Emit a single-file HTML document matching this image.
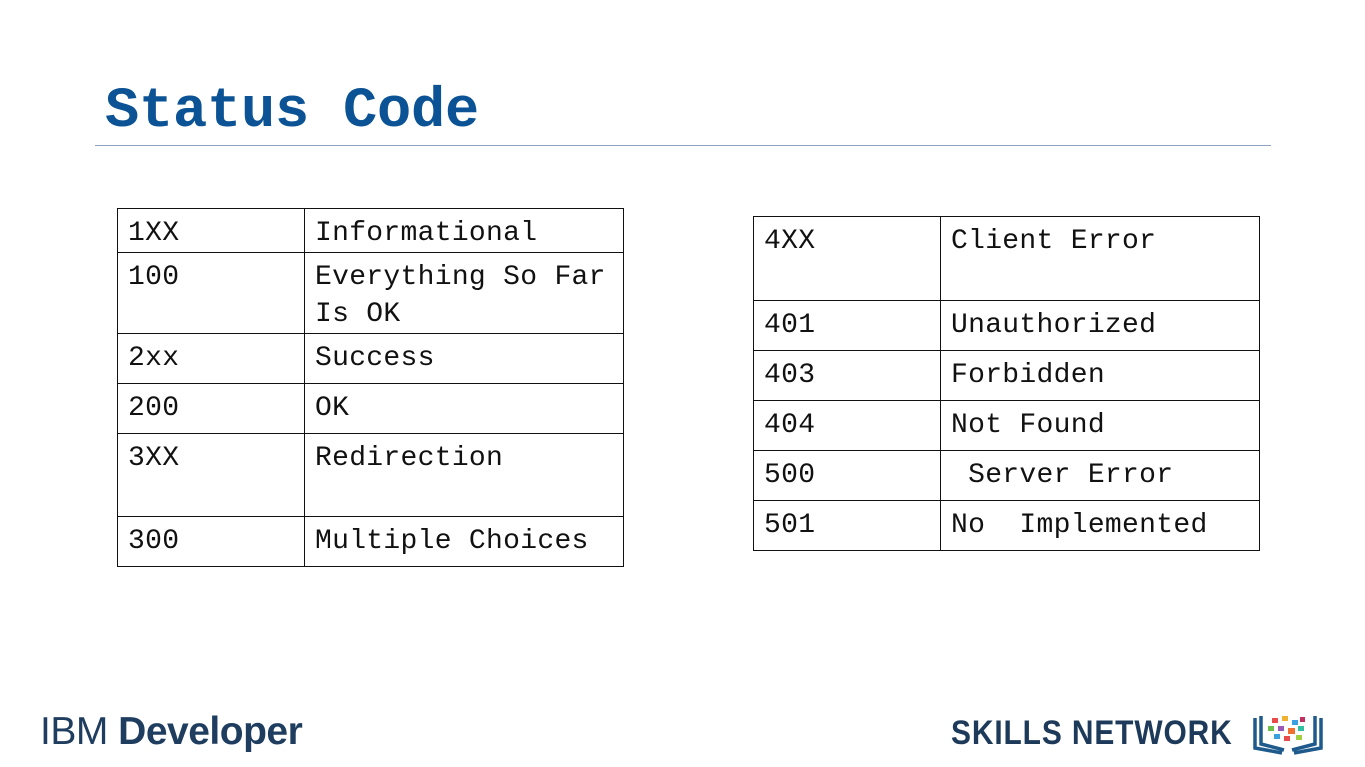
<!DOCTYPE html>
<html><head><meta charset="utf-8"><style>
body{margin:0;width:1365px;height:767px;background:#fff;position:relative;overflow:hidden;font-family:"Liberation Mono",monospace}
.t{position:absolute;left:105px;top:80px;font-size:57px;font-weight:bold;color:#0b5394;letter-spacing:-0.2px}
.hr{position:absolute;left:95px;top:145px;width:1176px;height:1px;background:#8ea3c4}
table{position:absolute;border-collapse:collapse;font-size:28px;color:#111}
td{border:1.5px solid #111;padding:6px 10px 0 10px;vertical-align:top;line-height:37px;box-sizing:border-box;letter-spacing:0.3px}
.ibm{position:absolute;left:40px;top:710px;font-family:"Liberation Sans",sans-serif;font-size:39px;color:#1f3d5f;letter-spacing:-0.5px}
.sk{position:absolute;left:951px;top:714px;font-family:"Liberation Sans",sans-serif;font-weight:bold;font-size:34px;color:#1e3a5a;letter-spacing:1px;transform:scaleX(0.88);transform-origin:left}
</style></head><body>
<div class="t">Status Code</div>
<div class="hr"></div>
<table style="left:117px;top:208px;width:507px">
<tr style="height:44px"><td style="width:187px">1XX</td><td>Informational</td></tr>
<tr style="height:81px"><td>100</td><td>Everything So Far Is OK</td></tr>
<tr style="height:50px"><td>2xx</td><td>Success</td></tr>
<tr style="height:50px"><td>200</td><td>OK</td></tr>
<tr style="height:83px"><td>3XX</td><td>Redirection</td></tr>
<tr style="height:50px"><td>300</td><td>Multiple Choices</td></tr>
</table>
<table style="left:753px;top:216px;width:507px">
<tr style="height:84px"><td style="width:187px">4XX</td><td>Client Error</td></tr>
<tr style="height:50px"><td>401</td><td>Unauthorized</td></tr>
<tr style="height:50px"><td>403</td><td>Forbidden</td></tr>
<tr style="height:50px"><td>404</td><td>Not Found</td></tr>
<tr style="height:50px"><td>500</td><td>&nbsp;Server Error</td></tr>
<tr style="height:50px"><td>501</td><td>No&nbsp; Implemented</td></tr>
</table>
<div class="ibm">IBM <b>Developer</b></div>
<div class="sk">SKILLS NETWORK</div>
<svg style="position:absolute;left:1252px;top:714px" width="72" height="42" viewBox="0 0 72 42">
<path d="M3 4 V34 L30 39 M9 2 V30 L32 36 M69 4 V34 L42 39 M63 2 V30 L40 36" stroke="#1e5a8c" stroke-width="3.5" fill="none"/>
<rect x="20" y="4" width="6" height="5" fill="#e94b4b"/><rect x="30" y="2" width="6" height="5" fill="#f0b030"/><rect x="40" y="6" width="6" height="5" fill="#3aa0e0"/><rect x="48" y="3" width="5" height="5" fill="#c03060"/>
<rect x="16" y="12" width="6" height="5" fill="#6cc04a"/><rect x="26" y="12" width="6" height="5" fill="#9b59b6"/><rect x="36" y="14" width="7" height="6" fill="#f07030"/><rect x="46" y="12" width="6" height="5" fill="#2ec0a0"/>
<rect x="22" y="20" width="6" height="5" fill="#3aa0e0"/><rect x="32" y="22" width="6" height="5" fill="#e94b4b"/><rect x="44" y="21" width="6" height="5" fill="#a0d040"/>
</svg>
</body></html>
